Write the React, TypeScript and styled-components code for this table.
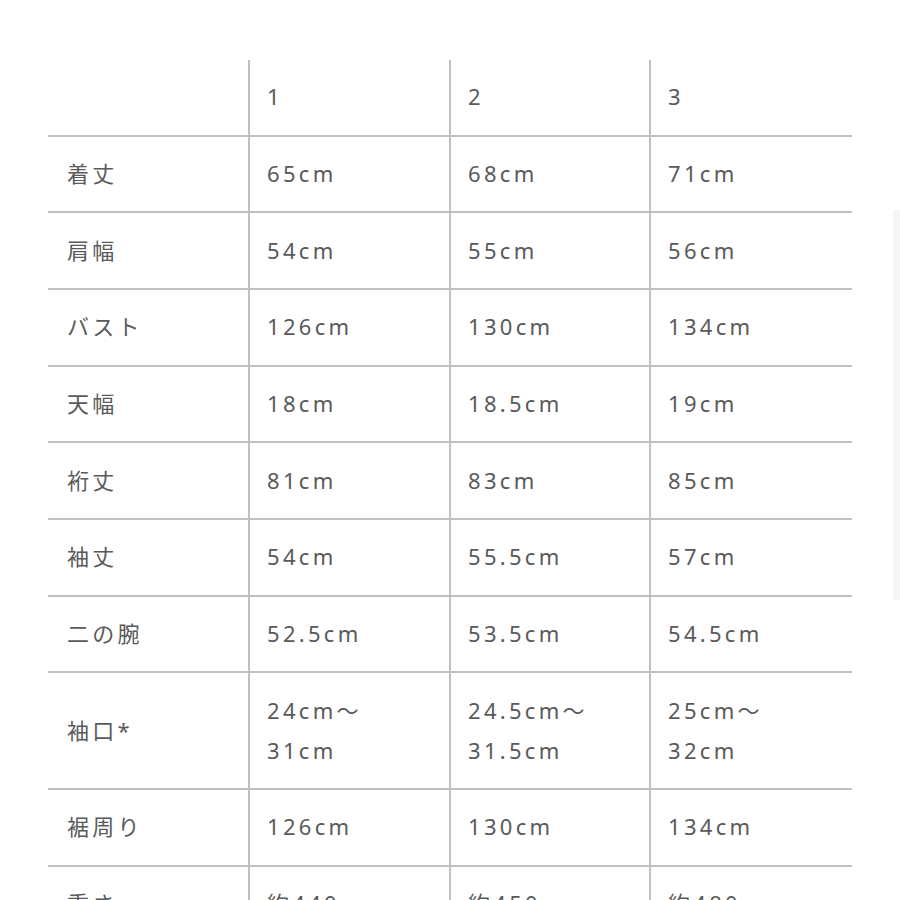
import React from 'react';
import styled, { createGlobalStyle } from 'styled-components';

const rows: { label: string; values: string[] }[] = [
  { label: '着丈', values: ['65cm', '68cm', '71cm'] },
  { label: '肩幅', values: ['54cm', '55cm', '56cm'] },
  { label: 'バスト', values: ['126cm', '130cm', '134cm'] },
  { label: '天幅', values: ['18cm', '18.5cm', '19cm'] },
  { label: '裄丈', values: ['81cm', '83cm', '85cm'] },
  { label: '袖丈', values: ['54cm', '55.5cm', '57cm'] },
  { label: '二の腕', values: ['52.5cm', '53.5cm', '54.5cm'] },
  { label: '袖口*', values: ['24cm〜\n31cm', '24.5cm〜\n31.5cm', '25cm〜\n32cm'] },
  { label: '裾周り', values: ['126cm', '130cm', '134cm'] },
  { label: '重さ', values: ['約440g', '約450g', '約480g'] },
];

const App: React.FC = () => {
  return (
    <>
      <GlobalStyle />
      <Page>
        <Table>
          <Cell $header $first />
          {['1', '2', '3'].map((size) => (
            <Cell key={size} $header>{size}</Cell>
          ))}
          {rows.map((row) => (
            <React.Fragment key={row.label}>
              <Cell $first>{row.label}</Cell>
              {row.values.map((v, i) => (
                <Cell key={i}>{v}</Cell>
              ))}
            </React.Fragment>
          ))}
        </Table>
      </Page>
      <ScrollHint />
    </>
  );
};

export default App;

const GlobalStyle = createGlobalStyle`
  html, body {
    margin: 0;
    padding: 0;
    background: #ffffff;
    overflow: hidden;
  }
  body {
    font-family: "Noto Sans", "Noto Sans CJK JP", sans-serif;
  }
`;

const Page = styled.div`
  width: 900px;
  height: 900px;
  overflow: hidden;
  padding: 60px 0 0 48px;
  box-sizing: border-box;
`;

const Table = styled.div`
  display: grid;
  grid-template-columns: 200px 201px 200px 203px;
  width: 804px;
`;

const Cell = styled.div<{ $header?: boolean; $first?: boolean }>`
  display: flex;
  align-items: center;
  padding: ${(p) => (p.$header ? '16.3px 0 18.3px' : '16.35px 0 18.35px')};
  padding-left: ${(p) => (p.$first ? '19px' : '17px')};
  border-bottom: 2px solid #c0c0c0;
  border-left: ${(p) => (p.$first ? 'none' : '2px solid #c0c0c0')};
  font-size: 22px;
  line-height: 40px;
  letter-spacing: 3.3px;
  color: #5a5a5a;
  white-space: pre-line;
  min-height: 40px;
`;

const ScrollHint = styled.div`
  position: fixed;
  right: 0;
  top: 210px;
  width: 7px;
  height: 390px;
  background: #f6f6f6;
`;
